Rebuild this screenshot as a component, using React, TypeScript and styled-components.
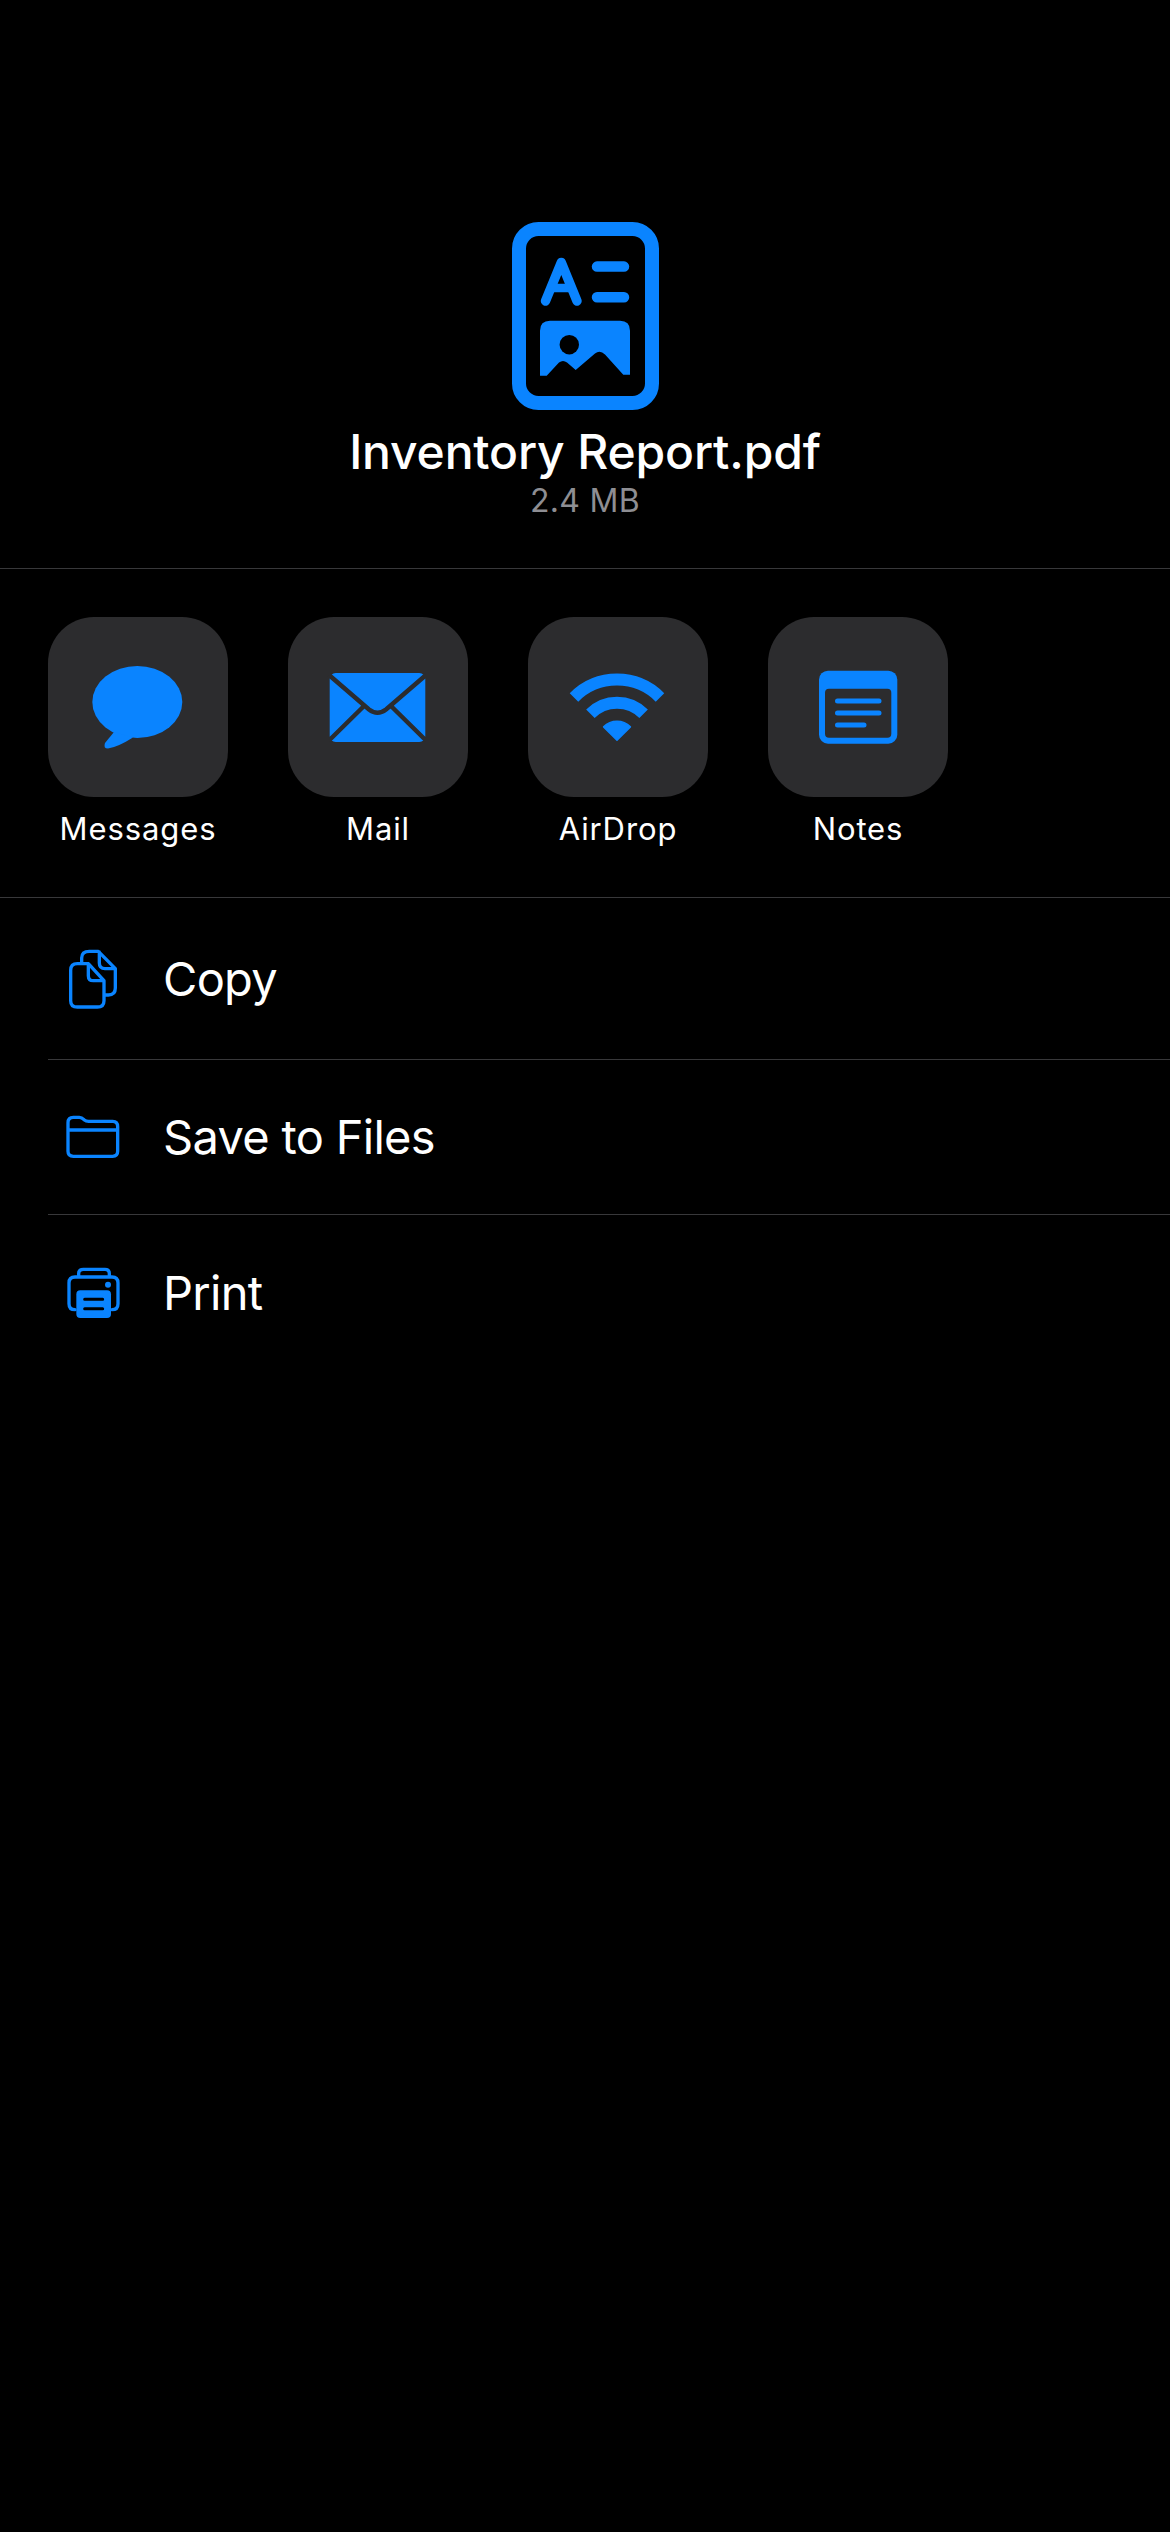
import React from "react";
import styled, { createGlobalStyle } from "styled-components";

const BLUE = "#0a84ff";
const TILE = "#2c2c2e";

const Global = createGlobalStyle`
  html, body { margin: 0; padding: 0; background: #000; }
  body { font-family: Inter, "Liberation Sans", sans-serif; color: #fff; -webkit-font-smoothing: antialiased; }
`;

const Screen = styled.div`
  width: 1170px;
  height: 2532px;
  background: #000;
  overflow: hidden;
`;

const Header = styled.header`
  height: 569px;
  box-sizing: border-box;
  padding-top: 222px;
  display: flex;
  flex-direction: column;
  align-items: center;
  border-bottom: 1px solid #38383a;
`;

const DocIcon = styled.svg`
  display: block;
  width: 147px;
  height: 188px;
`;

const Title = styled.h1`
  margin: 13px 0 0;
  font-size: 48px;
  line-height: 58px;
  font-weight: 500;
  letter-spacing: -0.15px;
`;

const Size = styled.div`
  font-size: 32px;
  line-height: 40px;
  letter-spacing: 0.3px;
  color: #8e8e93;
`;

const AppRow = styled.section`
  height: 329px;
  box-sizing: border-box;
  padding: 48px 48px 0;
  display: flex;
  gap: 60px;
  border-bottom: 1px solid #38383a;
`;

const AppItem = styled.div`
  width: 180px;
  display: flex;
  flex-direction: column;
  align-items: center;
`;

const Tile = styled.div`
  width: 180px;
  height: 180px;
  border-radius: 46px;
  background: ${TILE};
`;

const TileIcon = styled.svg`
  display: block;
  width: 180px;
  height: 180px;
`;

const AppLabel = styled.div`
  margin-top: 12px;
  font-size: 31px;
  line-height: 40px;
  letter-spacing: 0.9px;
  white-space: nowrap;
`;

const List = styled.div`
  display: flex;
  flex-direction: column;
  padding-left: 48px;
`;

const Row = styled.div<{ $height: number; $last?: boolean }>`
  height: ${(p) => p.$height}px;
  box-sizing: border-box;
  display: flex;
  align-items: center;
  gap: 39px;
  padding-left: 16px;
  border-bottom: ${(p) => (p.$last ? "none" : "1px solid #38383a")};
`;

const RowIcon = styled.svg`
  display: block;
  width: 60px;
  height: 60px;
  flex: none;
`;

const RowLabel = styled.span`
  font-size: 47px;
  line-height: 58px;
  font-weight: 400;
  letter-spacing: -0.7px;
`;

const Outline = { fill: "none", stroke: BLUE, strokeWidth: 10, strokeLinejoin: "round", strokeLinecap: "round" } as const;

export default function App() {
  return (
    <Screen>
      <Global />
      <Header>
        <DocIcon viewBox="0 0 147 188">
          <rect x="7" y="7" width="133" height="174" rx="19.5" fill="none" stroke={BLUE} strokeWidth="14" />
          <path d="M33.5 79 L49.3 40.5 L65 79" fill="none" stroke={BLUE} strokeWidth="9.5" strokeLinecap="round" strokeLinejoin="round" />
          <path d="M39.5 66 H59.5" fill="none" stroke={BLUE} strokeWidth="8.5" />
          <path d="M85 44.6 H112 M85 75.3 H112" fill="none" stroke={BLUE} strokeWidth="10.5" strokeLinecap="round" />
          <path d="M28 153.7 V108.7 Q28 98.7 38 98.7 H108 Q118 98.7 118 108.7 V152.7 H111.3 L93 132.5 Q88 127.5 83 131.5 L63.7 148 L55 140.5 Q51 137.5 47 140.5 L34.7 153.7 Z" fill={BLUE} />
          <circle cx="57.3" cy="122.7" r="9.7" fill="#000" />
        </DocIcon>
        <Title>Inventory Report.pdf</Title>
        <Size>2.4 MB</Size>
      </Header>
      <AppRow>
        <AppItem>
          <Tile>
            <TileIcon viewBox="0 0 180 180">
              <ellipse cx="89.3" cy="85" rx="45" ry="36" fill={BLUE} />
              <path d="M66 115 L57 126 Q55 131.500 60 131.500 Q70 130 85 120.500 Z" fill={BLUE} />
            </TileIcon>
          </Tile>
          <AppLabel>Messages</AppLabel>
        </AppItem>
        <AppItem>
          <Tile>
            <TileIcon viewBox="0 0 180 180">
              <rect x="41.7" y="56" width="95.600" height="69" rx="6" fill={BLUE} />
              <path d="M41 58 L81 92.500 Q89.500 99 98 92.500 L138 58 M41 123.500 L75 90 M138 123.500 L104 90" fill="none" stroke={TILE} strokeWidth="4.500" />
            </TileIcon>
          </Tile>
          <AppLabel>Mail</AppLabel>
        </AppItem>
        <AppItem>
          <Tile>
            <TileIcon viewBox="0 0 180 180">
              <path d="M46 80.400 A60.700 60.700 0 0 1 132 80.400 M62.400 96.700 A37.600 37.600 0 0 1 115.600 96.700" fill="none" stroke={BLUE} strokeWidth="12" />
              <path d="M89 123.300 L75.600 109.900 A19 19 0 0 1 102.400 109.900 Z" fill={BLUE} stroke={BLUE} strokeWidth="1.500" strokeLinejoin="round" />
            </TileIcon>
          </Tile>
          <AppLabel>AirDrop</AppLabel>
        </AppItem>
        <AppItem>
          <Tile>
            <TileIcon viewBox="0 0 180 180">
              <rect x="51" y="53.700" width="78.300" height="73" rx="9" fill={BLUE} />
              <rect x="57" y="71.700" width="66.300" height="49" rx="4" fill={TILE} />
              <path d="M69.500 84 H111 M69.500 96 H111 M69.500 108 H96" fill="none" stroke={BLUE} strokeWidth="5" strokeLinecap="round" />
            </TileIcon>
          </Tile>
          <AppLabel>Notes</AppLabel>
        </AppItem>
      </AppRow>
      <List>
        <Row $height={162}>
          <RowIcon viewBox="72 88 180 180">
            <path d="M125 130 V115 Q125 95 148 95 H175 L226 147 V205 Q226 226 205 226 H195 M178 97 V130 Q178 147 195 147 H226" {...Outline} />
            <path d="M145 132 H112 Q92 132 92 152 V243 Q92 262 112 262 H172 Q192 262 192 243 V183 L145 132 V168 Q145 183 160 183 H192" {...Outline} />
          </RowIcon>
          <RowLabel>Copy</RowLabel>
        </Row>
        <Row $height={155}>
          <RowIcon viewBox="72 563 180 180">
            <path d="M84 610 Q84 594 100 594 H118 Q125 594 132 601 Q138 606 146 606 H218 Q233 606 233 622 V696 Q233 711 218 711 H100 Q84 711 84 696 Z M84 632 H233" {...Outline} />
          </RowIcon>
          <RowLabel>Save to Files</RowLabel>
        </Row>
        <Row $height={155} $last>
          <RowIcon viewBox="72 1028 180 180">
            <path d="M116 1068 V1060 Q116 1047 130 1047 H195 Q208 1047 208 1060 V1068" {...Outline} />
            <path d="M105 1168 Q87 1168 87 1150 V1088 Q87 1070 105 1070 H216 Q234 1070 234 1088 V1150 Q234 1168 216 1168" {...Outline} />
            <circle cx="204" cy="1093" r="9" fill={BLUE} />
            <rect x="109" y="1110" width="104" height="83" rx="12" fill={BLUE} />
            <path d="M134 1137 H188 M134 1165 H188" fill="none" stroke="#000" strokeWidth="9" strokeLinecap="round" />
          </RowIcon>
          <RowLabel>Print</RowLabel>
        </Row>
      </List>
    </Screen>
  );
}
